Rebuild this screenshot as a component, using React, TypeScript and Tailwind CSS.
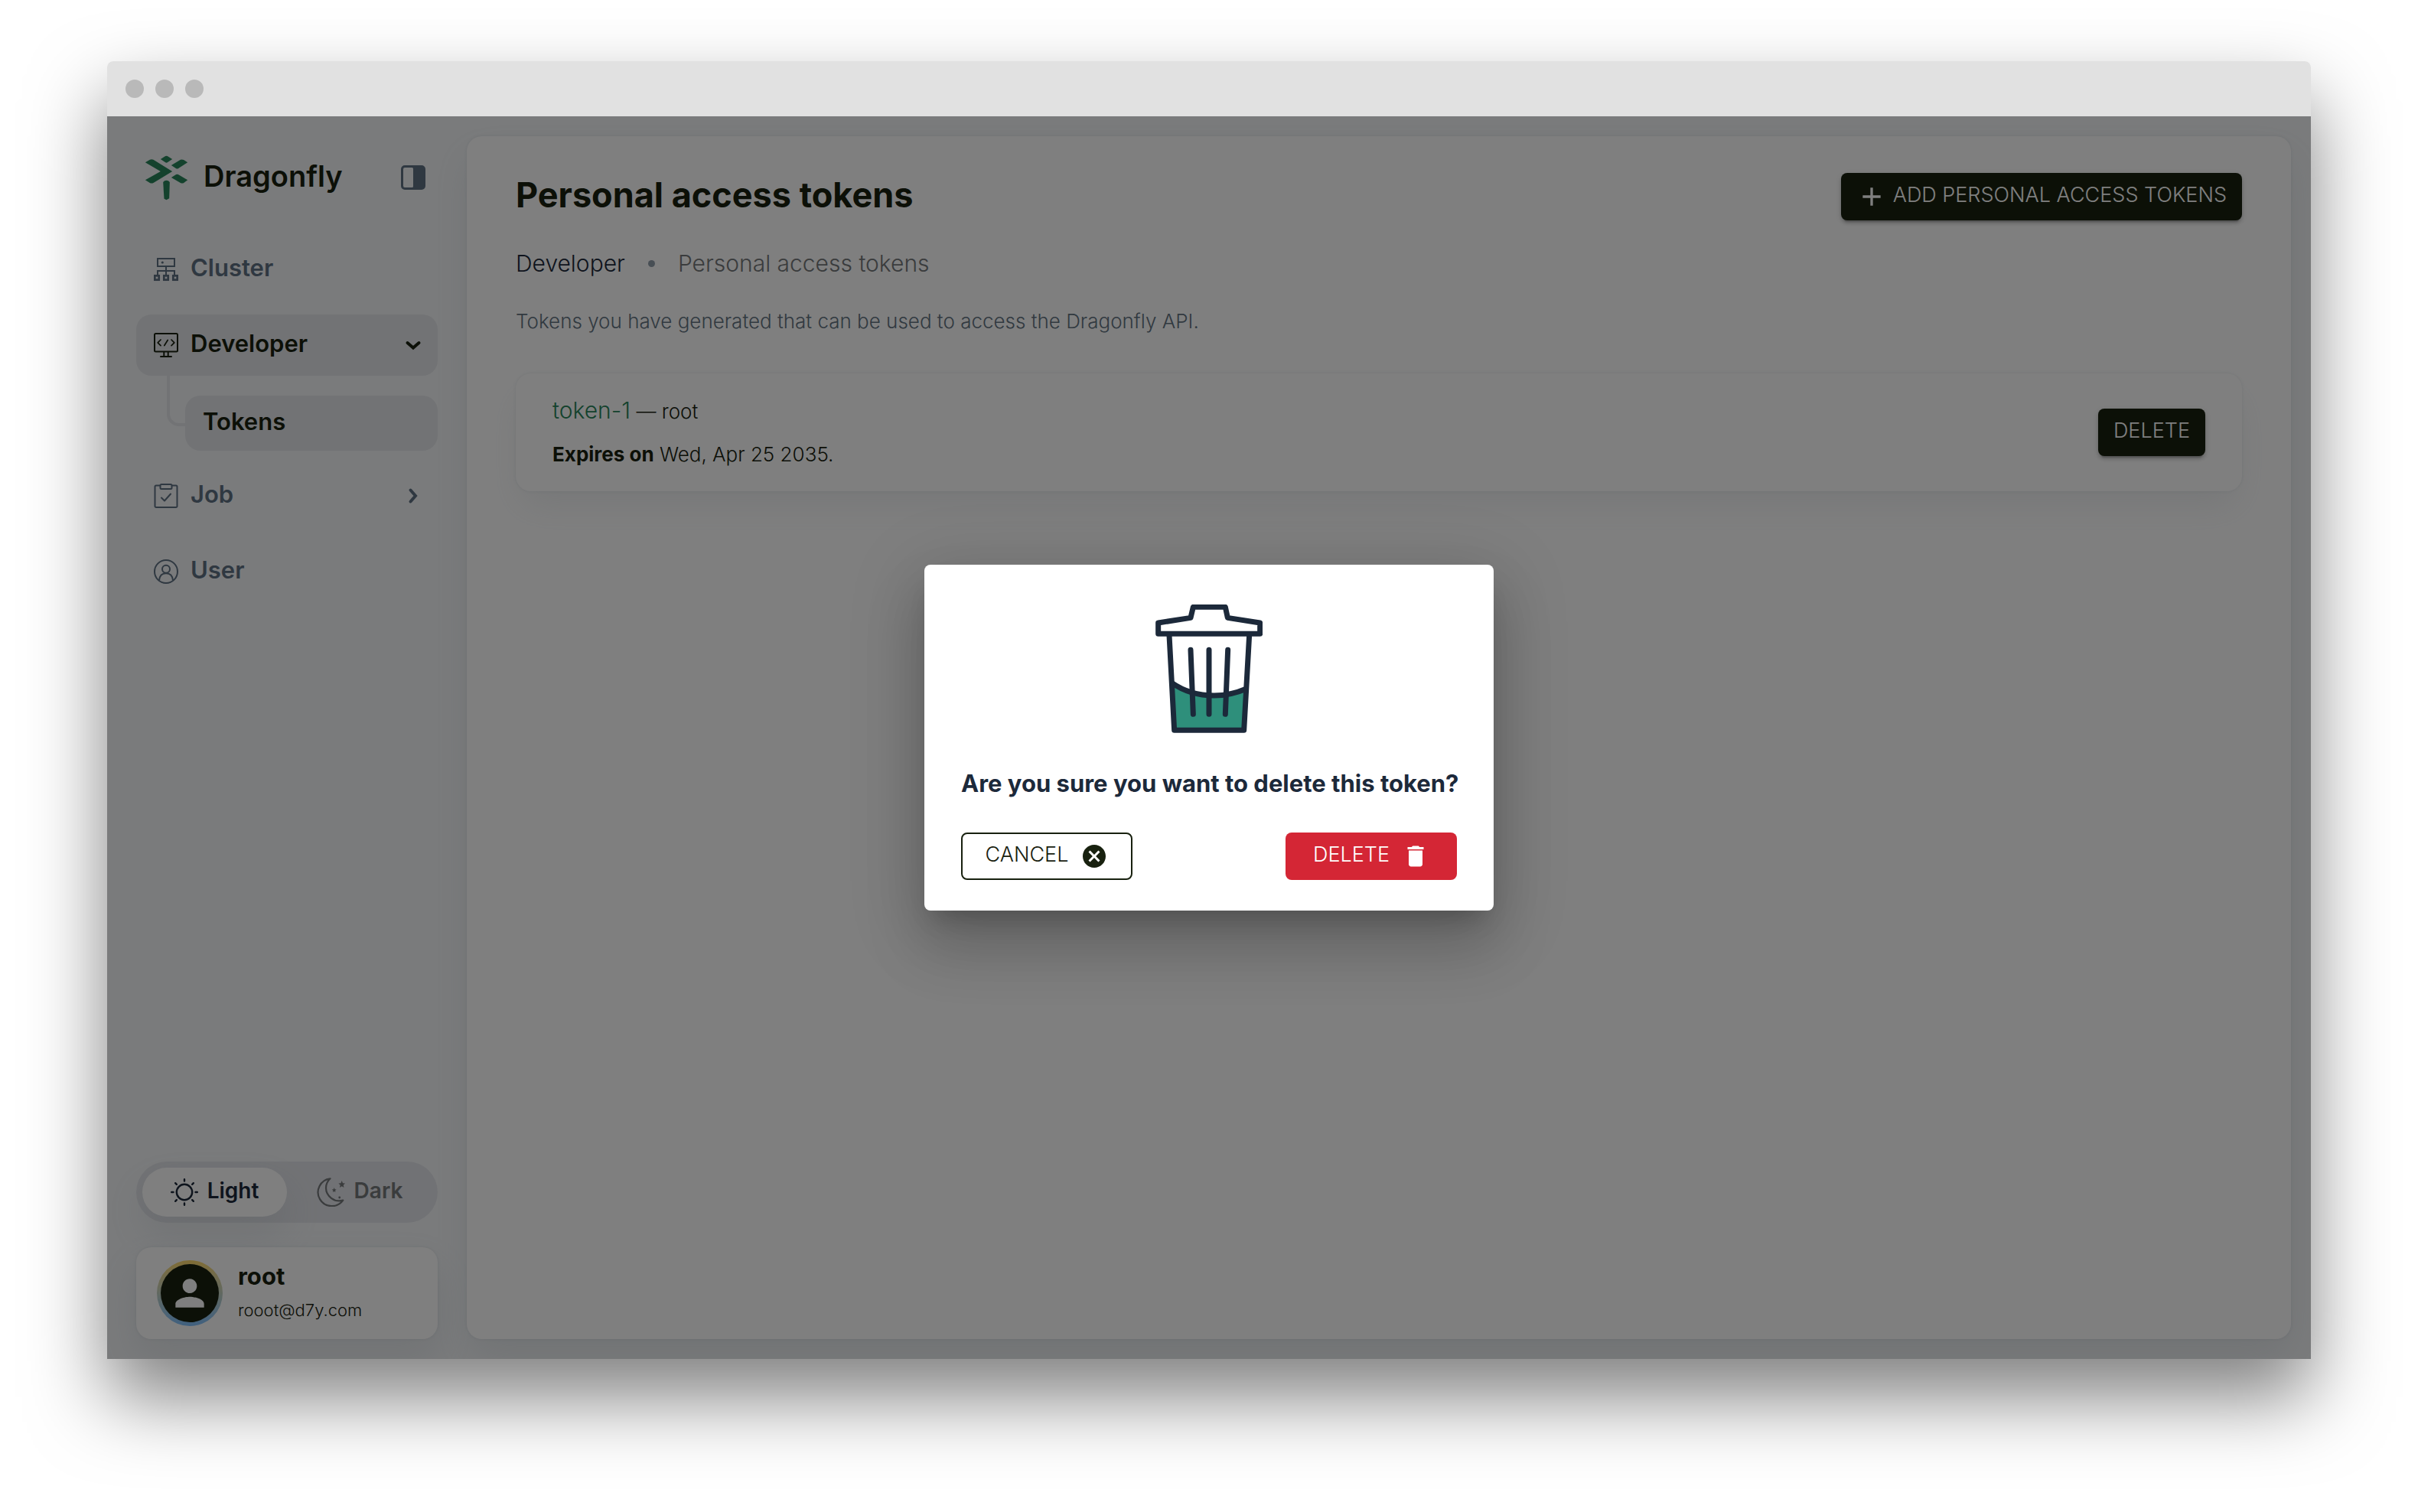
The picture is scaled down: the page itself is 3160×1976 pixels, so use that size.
import type { ReactNode } from "react";

type IconProps = { className?: string };

function Logo() {
  return (
    <svg viewBox="205 427 170 177" className="h-[59px] w-[57px]" fill="#29855a" aria-hidden="true">
      <path d="M267 442 L286 430 Q290 428 294 430 L313 442 L294 455 Q290 457 286 455 Z" />
      <path d="M207 455 L225 444 Q232 441 239 444 L313 490 L239 535 Q232 538 225 535 L207 524 L267 490 Z" />
      <path d="M309 466 L345 444 Q352 442 358 445 L373 455 L337 478 Q332 481 327 478 Z" />
      <path d="M309 514 L328 502 Q332 500 336 502 L373 524 L358 535 Q352 538 345 535 Z" />
      <path d="M277 532 Q282 525 290 525 Q298 525 303 532 L301 596 L290 602 L281 597 Z" />
    </svg>
  );
}

function PanelIcon() {
  return (
    <svg viewBox="0 0 32 32" className="size-8" aria-hidden="true">
      <path
        fill="#5f7183"
        fillRule="evenodd"
        d="M5 0H27A5 5 0 0 1 32 5V27A5 5 0 0 1 27 32H5A5 5 0 0 1 0 27V5A5 5 0 0 1 5 0ZM5 3A2 2 0 0 0 3 5V27A2 2 0 0 0 5 29H14.500A1.500 1.500 0 0 0 16 27.500V4.500A1.500 1.500 0 0 0 14.500 3Z"
      />
    </svg>
  );
}

function ClusterIcon() {
  return (
    <svg viewBox="0 0 32 32" className="size-8" fill="none" stroke="currentColor" strokeWidth="2" aria-hidden="true">
      <rect x="5" y="2" width="22" height="10" />
      <path d="M16 12V24M5 24V18H27V24" />
      <circle cx="11.300" cy="7" r="1.600" fill="currentColor" stroke="none" />
      <g strokeWidth="2.700">
        <rect x="1.300" y="24.300" width="5.400" height="5.400" />
        <rect x="13.300" y="24.300" width="5.400" height="5.400" />
        <rect x="25.300" y="24.300" width="5.400" height="5.400" />
      </g>
    </svg>
  );
}

function DeveloperIcon() {
  return (
    <svg viewBox="0 0 32 32" className="size-8" fill="none" stroke="currentColor" strokeWidth="2" strokeLinecap="round" strokeLinejoin="round" aria-hidden="true">
      <rect x="1" y="1" width="30" height="23.500" rx="1.500" />
      <path d="M9 9L5.200 12.800L9 16.600M23 9L26.800 12.800L23 16.600M18.200 9.500L13.800 16.500" strokeWidth="1.700" />
      <path d="M13.300 25V30M18.700 25V30M9 31H23" />
    </svg>
  );
}

function JobIcon() {
  return (
    <svg viewBox="0 0 32 32" className="size-8" fill="none" stroke="currentColor" strokeWidth="2" strokeLinecap="round" strokeLinejoin="round" aria-hidden="true">
      <path d="M8 2.500H3A1.500 1.500 0 0 0 1.500 4V29.500A1.500 1.500 0 0 0 3 31H29A1.500 1.500 0 0 0 30.500 29.500V4A1.500 1.500 0 0 0 29 2.500H24" />
      <rect x="8.500" y="1" width="15" height="6" rx="1.500" />
      <path d="M10 18.500L14 22.500L22 13.500" />
    </svg>
  );
}

function UserIcon() {
  return (
    <svg viewBox="0 0 32 32" className="size-8" fill="none" stroke="currentColor" strokeWidth="2" aria-hidden="true">
      <circle cx="16" cy="16" r="15" />
      <circle cx="16" cy="12.700" r="5" />
      <path d="M7 27.500C7.500 21.500 11 18.200 16 18.200S24.500 21.500 25 27.500" />
    </svg>
  );
}

function Chevron({ open }: { open: boolean }) {
  return (
    <svg viewBox="0 0 32 32" className="size-8" fill="none" stroke="currentColor" strokeWidth="4" strokeLinecap="round" aria-hidden="true">
      <path d={open ? "M8.500 13L16 19.500L23.500 13" : "M12.500 8.500L19 16L12.500 23.500"} />
    </svg>
  );
}

function SunIcon() {
  return (
    <svg viewBox="0 0 36 36" className="size-9" fill="none" stroke="currentColor" strokeWidth="2.400" strokeLinecap="round" aria-hidden="true">
      <circle cx="18" cy="18" r="10.200" />
      <path d="M18 1.200V3.500M18 32.500V34.800M1.200 18H3.500M32.500 18H34.800M6.200 6.200L7.800 7.800M28.200 28.200L29.800 29.800M29.800 6.200L28.200 7.800M7.800 28.200L6.200 29.800" />
    </svg>
  );
}

function MoonIcon() {
  return (
    <svg viewBox="0 0 38 38" className="size-[38px]" fill="none" stroke="currentColor" strokeWidth="2.200" strokeLinejoin="round" aria-hidden="true">
      <path d="M18.500 1.300A18 18 0 1 0 35.300 29.600C24 33 13 24 13 13.500C13 8.500 15 4.500 18.500 1.300Z" />
      <g fill="currentColor" stroke="none">
        <path d="M33.700 4L35 7.200L38 7.500L35.700 9.700L36.500 13L33.700 11.300L30.900 13L31.700 9.700L29.400 7.500L32.400 7.200Z" />
        <path d="M23.700 13L24.500 15.200L26.600 15.400L25 16.900L25.500 19L23.700 17.900L21.900 19L22.400 16.900L20.800 15.400L22.900 15.200Z" />
        <circle cx="30.700" cy="26" r="1.400" />
      </g>
    </svg>
  );
}

function MaterialIcon({ d, className }: { d: string; className?: string }) {
  return (
    <svg viewBox="0 0 24 24" className={className} fill="currentColor" aria-hidden="true">
      <path d={d} />
    </svg>
  );
}

const ADD = "M19 13h-6v6h-2v-6H5v-2h6V5h2v6h6v2z";
const PERSON =
  "M12 12c2.210 0 4-1.790 4-4s-1.790-4-4-4-4 1.790-4 4 1.790 4 4 4zm0 2c-2.670 0-8 1.340-8 4v2h16v-2c0-2.660-5.330-4-8-4z";
const CANCEL =
  "M12 2C6.470 2 2 6.470 2 12s4.470 10 10 10 10-4.470 10-10S17.530 2 12 2zm5 13.590L15.590 17 12 13.410 8.410 17 7 15.590 10.590 12 7 8.410 8.410 7 12 10.590 15.590 7 17 8.410 13.410 12 17 15.590z";
const TRASH = "M6 19c0 1.100.9 2 2 2h8c1.100 0 2-.9 2-2V7H6v12zM19 4h-3.500l-1-1h-5l-1 1H5v2h14V4z";

function TrashArt({ className }: IconProps) {
  return (
    <svg viewBox="90 60 420 504" className={className} fill="none" stroke="#1c293a" strokeWidth="21" strokeLinecap="round" strokeLinejoin="round" aria-hidden="true">
      <path fill="#2e8f7b" stroke="none" d="M154 372Q226 417 320 417Q385 417 447 390L437 553H164Z" />
      <path strokeLinecap="butt" d="M154 367Q226 417 320 417Q385 417 447 390" />
      <path d="M144 180L164 553H437L458 180" />
      <path fill="#ffffff" d="M101 175V132L228 112L238 70H364L373 112L500 132V175Z" />
      <path d="M228 238L238 490M300 238V490M374 238L364 490" />
    </svg>
  );
}

function NavItem({ icon, label, active, open }: { icon: ReactNode; label: string; active?: boolean; open?: boolean }) {
  return (
    <a
      href="#"
      className={`flex h-20 items-center gap-4 rounded-[20px] pr-4 pl-[23px] text-[31px] leading-10 font-semibold ${
        active ? "bg-[#e4e6ea] text-[#18210f]" : "text-[#5f7183]"
      }`}
    >
      {icon}
      <span className="flex-1 pb-1">{label}</span>
      {open !== undefined && <Chevron open={open} />}
    </a>
  );
}

function Sidebar() {
  return (
    <aside className="flex w-[470px] shrink-0 flex-col px-[38px] pt-12 pb-[26px]">
      <div className="flex h-16 items-center pr-4 pl-[11px]">
        <Logo />
        <span className="ml-5 flex-1 pb-1 text-[38px] leading-10 font-semibold text-[#18210f]">Dragonfly</span>
        <button type="button" aria-label="Collapse sidebar">
          <PanelIcon />
        </button>
      </div>

      <nav className="mt-12 flex flex-col gap-[19px]">
        <NavItem icon={<ClusterIcon />} label="Cluster" />
        <div>
          <NavItem icon={<DeveloperIcon />} label="Developer" active open />
          <div className="flex items-start pl-10">
            <div className="h-[66px] w-6 rounded-bl-[16px] border-b-4 border-l-4 border-[#e4e6ea]" />
            <a
              href="#"
              className="mt-[26px] flex h-[72px] flex-1 items-center rounded-[20px] bg-[#e4e6ea] pl-[23px] text-[31px] leading-10 font-semibold text-[#18210f]"
            >
              <span className="pb-1">Tokens</span>
            </a>
          </div>
        </div>
        <NavItem icon={<JobIcon />} label="Job" open={false} />
        <NavItem icon={<UserIcon />} label="User" />
      </nav>

      <div className="mt-auto grid h-20 grid-cols-2 rounded-full bg-[#e3e5ea] p-2 text-[28px] leading-10 font-semibold">
        <button
          type="button"
          aria-pressed="true"
          className="flex items-center justify-center gap-3 rounded-full bg-white text-[#1c293a] shadow-[0_24px_48px_rgba(145,158,171,0.16)]"
        >
          <SunIcon />
          <span className="pb-1">Light</span>
        </button>
        <button type="button" aria-pressed="false" className="flex items-center justify-center gap-3 rounded-full text-[#75787b]">
          <MoonIcon />
          <span className="pb-1">Dark</span>
        </button>
      </div>

      <div className="mt-8 flex h-[120px] items-center rounded-[20px] bg-white pl-[27px] shadow-[0_0_4px_rgba(145,158,171,0.2),0_24px_48px_rgba(145,158,171,0.16)]">
        <div className="rounded-full bg-linear-to-b from-[#ffd968] to-[#7fc0ff] p-[5px]">
          <div className="flex size-[76px] items-center justify-center rounded-full bg-[#18210f] text-white">
            <MaterialIcon d={PERSON} className="size-14" />
          </div>
        </div>
        <div className="ml-5 text-[#18210f]">
          <p className="text-[31px] leading-10 font-bold">root</p>
          <p className="mt-1 text-[22px] leading-10 font-light">rooot@d7y.com</p>
        </div>
      </div>
    </aside>
  );
}

function DarkButton({ children }: { children: ReactNode }) {
  return (
    <button
      type="button"
      className="flex h-[62px] items-center rounded-lg bg-[#18210f] px-5 text-[27px] leading-10 font-light text-white shadow-[0_6px_2px_-4px_rgba(0,0,0,0.2),0_4px_4px_rgba(0,0,0,0.14),0_2px_10px_rgba(0,0,0,0.12)]"
    >
      {children}
    </button>
  );
}

function TokensPage() {
  return (
    <main className="mt-[26px] mr-[26px] mb-[26px] flex-1 rounded-[20px] bg-white px-16 pt-12 shadow-[0_0_4px_rgba(145,158,171,0.2),0_24px_48px_-8px_rgba(145,158,171,0.2)]">
      <div className="flex items-center justify-between">
        <h1 className="pb-1 text-[45px] leading-[56px] font-bold text-[#18210f]">Personal access tokens</h1>
        <DarkButton>
          <MaterialIcon d={ADD} className="size-10" />
          <span className="pb-1 pl-2">ADD PERSONAL ACCESS TOKENS</span>
        </DarkButton>
      </div>

      <nav aria-label="Breadcrumb" className="mt-9 flex items-center text-[30px] leading-10 font-light">
        <a href="#" className="text-[#1c293a]">
          Developer
        </a>
        <span className="mx-[30px] size-[9px] rounded-full bg-[#919eab]" />
        <span className="text-[#75787b]">Personal access tokens</span>
      </nav>
      <p className="mt-9 text-[26px] leading-10 font-light text-[#637381]">
        Tokens you have generated that can be used to access the Dragonfly API.
      </p>

      <section className="mt-12 flex items-center justify-between rounded-[20px] bg-white px-12 py-7 text-[#18210f] shadow-[0_0_4px_rgba(145,158,171,0.2),0_24px_48px_-8px_rgba(145,158,171,0.16)]">
        <div className="flex flex-col gap-4 text-[26px] leading-10 font-light">
          <p>
            <a href="#" className="text-[30px] text-[#29855a]">
              token-1
            </a>{" "}
            — root
          </p>
          <p>
            <b className="font-bold">Expires on</b> Wed, Apr 25 2035.
          </p>
        </div>
        <DarkButton>
          <span className="pb-1">DELETE</span>
        </DarkButton>
      </section>
    </main>
  );
}

function DeleteDialog() {
  return (
    <div className="absolute inset-0 flex items-center justify-center bg-black/50">
      <div
        role="dialog"
        aria-modal="true"
        aria-labelledby="dialog-title"
        className="flex w-[744px] flex-col rounded-lg bg-white px-12 pt-[52px] pb-10 shadow-[0_22px_30px_-14px_rgba(0,0,0,0.2),0_48px_76px_6px_rgba(0,0,0,0.14),0_18px_92px_16px_rgba(0,0,0,0.12)]"
      >
        <TrashArt className="h-[168px] w-[140px] self-center" />
        <h2 id="dialog-title" className="mt-[46px] text-center text-[31px] leading-10 font-bold whitespace-nowrap text-[#1c293a]">
          Are you sure you want to delete this token?
        </h2>
        <div className="mt-11 flex justify-between text-[27px] leading-10 font-light">
          <button
            type="button"
            className="flex h-[62px] w-56 items-center justify-center gap-4 rounded-lg border-2 border-[#18210f] text-[#18210f]"
          >
            <span className="pb-1">CANCEL</span>
            <MaterialIcon d={CANCEL} className="size-9" />
          </button>
          <button type="button" className="flex h-[62px] w-56 items-center justify-center gap-4 rounded-lg bg-[#d42635] text-white">
            <span className="pb-1">DELETE</span>
            <MaterialIcon d={TRASH} className="size-9" />
          </button>
        </div>
      </div>
    </div>
  );
}

export default function App() {
  return (
    <div className="flex min-h-screen flex-col bg-white px-[140px] pt-20 pb-[200px] font-['Inter',sans-serif]">
      <div className="flex flex-1 flex-col rounded-t-lg shadow-[0_50px_100px_rgba(0,0,0,0.5)]">
        <div className="flex h-[72px] items-center gap-[15px] rounded-t-lg bg-[#e1e1e1] px-6">
          <span className="size-6 rounded-full bg-[#b9b9b9]" />
          <span className="size-6 rounded-full bg-[#b9b9b9]" />
          <span className="size-6 rounded-full bg-[#b9b9b9]" />
        </div>
        <div className="relative flex flex-1 overflow-hidden bg-[#f4f6f8]">
          <Sidebar />
          <TokensPage />
          <DeleteDialog />
        </div>
      </div>
    </div>
  );
}
